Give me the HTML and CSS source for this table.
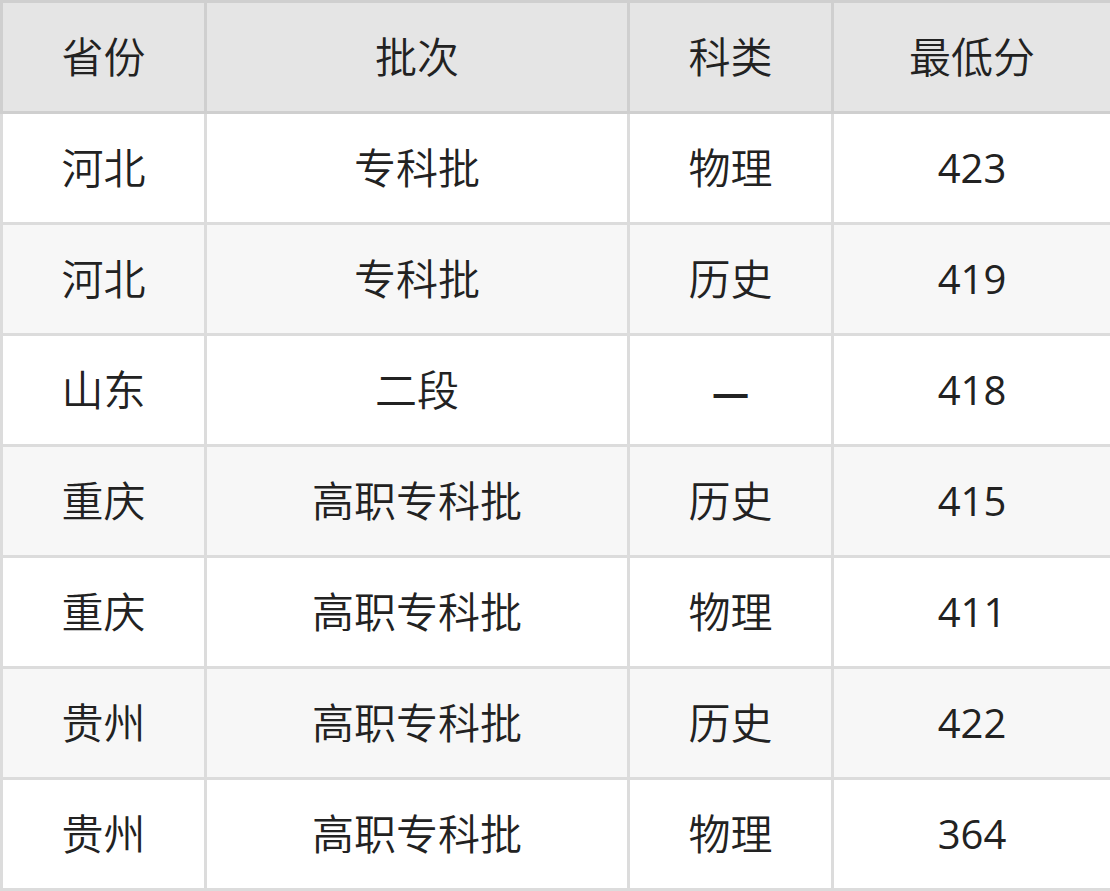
FILE: index.html
```html
<!DOCTYPE html>
<html lang="zh">
<head>
<meta charset="utf-8">
<link rel="stylesheet" href="styles.css">
</head>
<body>
<table class="score-table">
  <colgroup>
    <col class="c1"><col class="c2"><col class="c3"><col class="c4">
  </colgroup>
  <thead>
    <tr><th>省份</th><th>批次</th><th>科类</th><th>最低分</th></tr>
  </thead>
  <tbody>
    <tr><td>河北</td><td>专科批</td><td>物理</td><td class="num">423</td></tr>
    <tr><td>河北</td><td>专科批</td><td>历史</td><td class="num">419</td></tr>
    <tr><td>山东</td><td>二段</td><td class="dash">—</td><td class="num">418</td></tr>
    <tr><td>重庆</td><td>高职专科批</td><td>历史</td><td class="num">415</td></tr>
    <tr><td>重庆</td><td>高职专科批</td><td>物理</td><td class="num">411</td></tr>
    <tr><td>贵州</td><td>高职专科批</td><td>历史</td><td class="num">422</td></tr>
    <tr><td>贵州</td><td>高职专科批</td><td>物理</td><td class="num">364</td></tr>
  </tbody>
</table>
</body>
</html>
```
FILE: styles.css
```css
html, body {
  margin: 0;
  padding: 0;
  background: #ffffff;
}
.score-table {
  width: 1110px;
  border-collapse: collapse;
  table-layout: fixed;
  font-family: "Open Sans", "Noto Sans CJK SC", sans-serif;
  font-size: 42px;
  color: #222222;
}
.c1 { width: 204px; }
.c2 { width: 423px; }
.c3 { width: 204px; }
.c4 { width: 279px; }
.score-table th,
.score-table td {
  height: 108px;
  padding: 0;
  text-align: center;
  vertical-align: middle;
  border: 3px solid #dcdcdc;
  font-weight: 350;
  line-height: 1;
}
.score-table td.num {
  font-size: 40px;
  font-weight: 400;
}
.score-table td.dash {
  font-family: "Noto Sans CJK SC", sans-serif;
  font-weight: 700;
}
.score-table thead th {
  background: #e5e5e5;
  border-color: #cfcfcf;
}
.score-table tbody tr:nth-child(even) td {
  background: #f7f7f7;
}
```
